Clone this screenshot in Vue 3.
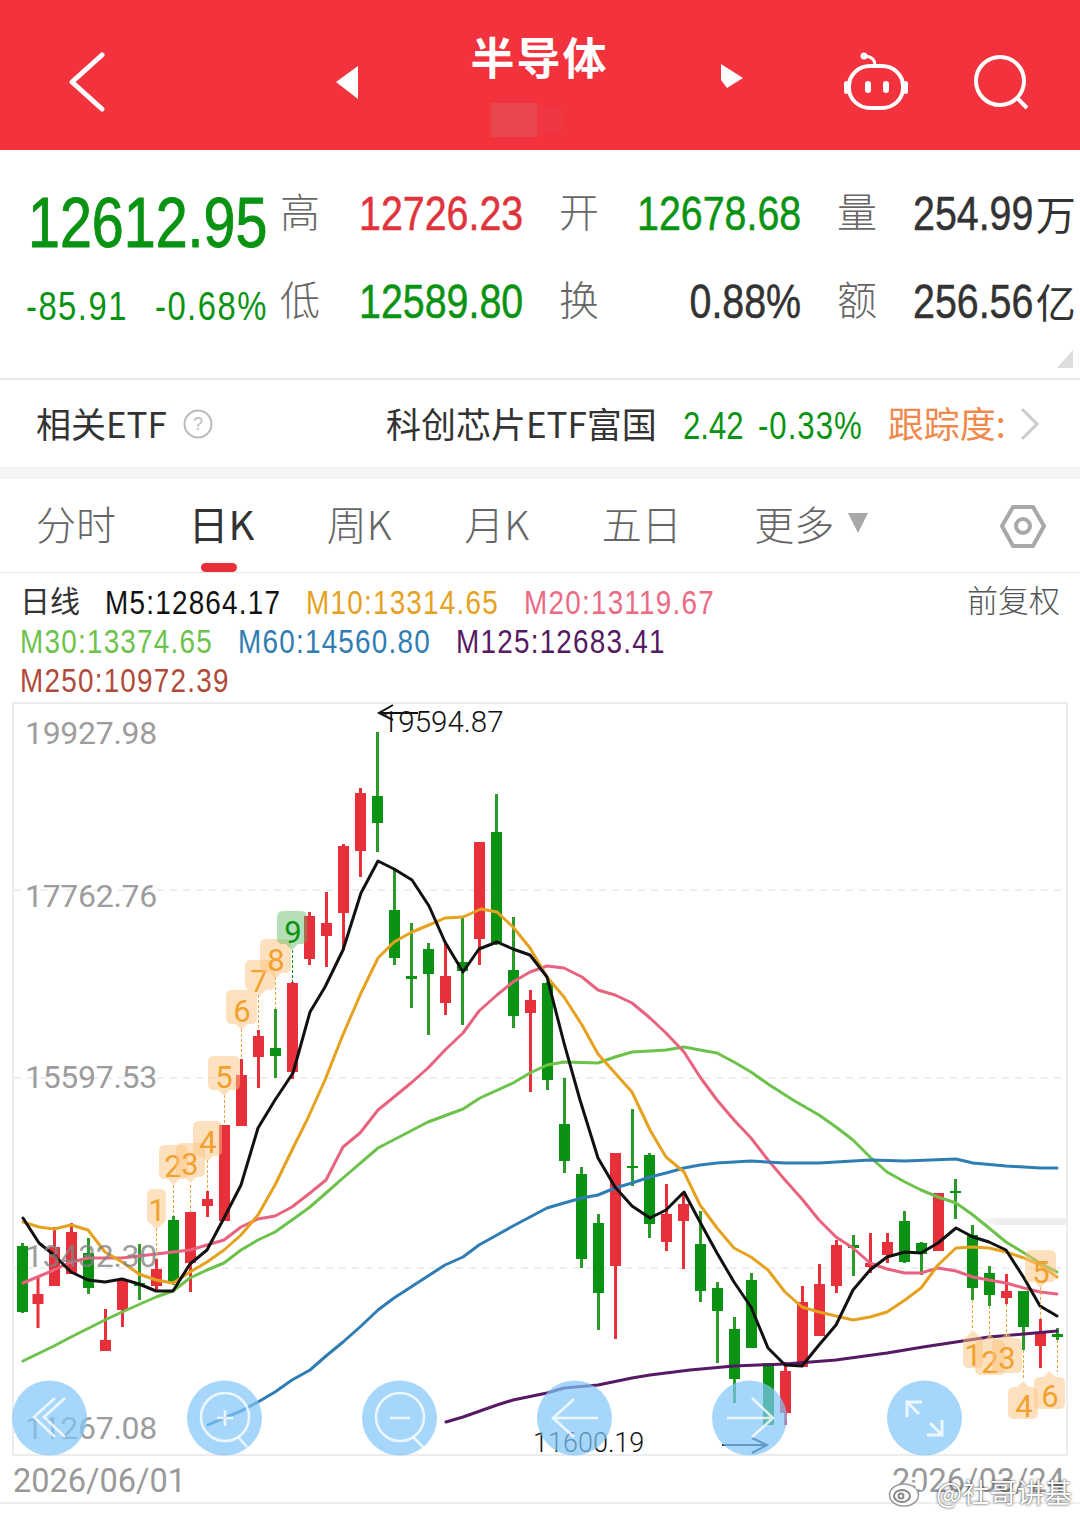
<template>
  <div class="page">
    <header class="top">
      <svg class="back" width="36" height="60" viewBox="0 0 36 60">
        <path d="M33 3 L3 30 L33 57" fill="none" stroke="#fff" stroke-width="5" stroke-linecap="round" stroke-linejoin="round" />
      </svg>
      <svg class="prev" width="22" height="34" viewBox="0 0 22 34">
        <polygon points="0,17 22,1 22,34" fill="#fff" />
      </svg>
      <div class="title-box">
        <div class="title">半导体</div>
        <div class="sub-blur"></div>
      </div>
      <svg class="next" width="22" height="26" viewBox="0 0 22 26">
        <polygon points="0,0 22,14 6,24 0,16" fill="#fff" />
      </svg>
      <svg class="robot" width="66" height="60" viewBox="0 0 66 60">
        <circle cx="21" cy="4" r="3.5" fill="#fff" />
        <path d="M23 4 C29 5 32 8 32 13" fill="none" stroke="#fff" stroke-width="3" />
        <rect x="6" y="14" width="54" height="42" rx="21" ry="20" fill="none" stroke="#fff" stroke-width="4" />
        <rect x="1" y="29" width="5" height="13" rx="2.5" fill="#fff" />
        <rect x="60" y="29" width="5" height="13" rx="2.5" fill="#fff" />
        <rect x="22" y="29" width="6" height="12" rx="3" fill="#fff" />
        <rect x="40" y="29" width="6" height="12" rx="3" fill="#fff" />
      </svg>
      <svg class="search" width="58" height="58" viewBox="0 0 58 58">
        <circle cx="27" cy="26" r="24" fill="none" stroke="#fff" stroke-width="4" />
        <path d="M44 43 L54 53" stroke="#fff" stroke-width="4" />
      </svg>
    </header>

    <section class="quote">
      <div class="grid">
        <div class="price"><span class="cond cond-l">12612.95</span></div>
        <div class="lab">高</div>
        <div class="val red"><span class="cond">12726.23</span></div>
        <div class="lab lab-m">开</div>
        <div class="val green"><span class="cond">12678.68</span></div>
        <div class="lab lab-m">量</div>
        <div class="val val-last dark"><span class="cond cond-l">254.99</span><span class="unit">万</span></div>

        <div class="change">
          <span class="fit fit-a"><span class="cond cond-l">-85.91</span></span>
          <span class="fit fit-b"><span class="cond cond-l">-0.68%</span></span>
        </div>
        <div class="lab">低</div>
        <div class="val green"><span class="cond">12589.80</span></div>
        <div class="lab lab-m">换</div>
        <div class="val dark"><span class="cond">0.88%</span></div>
        <div class="lab lab-m">额</div>
        <div class="val val-last dark"><span class="cond cond-l">256.56</span><span class="unit">亿</span></div>
      </div>
      <div class="corner"></div>
    </section>

    <section class="etf">
      <div class="etf-name">相关ETF</div>
      <svg class="help" width="30" height="30" viewBox="0 0 30 30">
        <circle cx="15" cy="15" r="13.5" fill="none" stroke="#bbb" stroke-width="2" />
        <text x="15" y="21" text-anchor="middle" class="help-q">?</text>
      </svg>
      <div class="etf-fund">科创芯片ETF富国</div>
      <span class="fit etf-num"><span class="cond cond-l">2.42</span></span>
      <span class="fit etf-num etf-pct"><span class="cond cond-l">-0.33%</span></span>
      <div class="etf-track">跟踪度:</div>
      <svg class="etf-arrow" width="20" height="34" viewBox="0 0 20 34">
        <path d="M2 2 L17 17 L2 32" fill="none" stroke="#ccc" stroke-width="3" />
      </svg>
    </section>

    <nav class="tabs">
      <div v-for="t in tabs" :key="t" class="tab" :class="{ on: t === '日K' }">{{ t }}</div>
      <div class="more-tri"></div>
      <svg class="hex" width="46" height="44" viewBox="0 0 46 44">
        <polygon points="2,21 13,2 33,2 44,21 33,41 13,41" fill="none" stroke="#a8a8a8" stroke-width="4" stroke-linejoin="round" />
        <circle cx="23" cy="21" r="7" fill="none" stroke="#a8a8a8" stroke-width="4" />
      </svg>
    </nav>

    <section class="legend">
      <div v-for="(row, i) in legend" :key="i" class="leg-row">
        <span v-if="i === 0" class="leg-day">日线</span>
        <span v-for="m in row" :key="m.t" class="fit" :style="{ width: m.w + 'px', color: m.c }"><span class="cond cond-l">{{ m.t }}</span></span>
        <span v-if="i === 0" class="leg-adj">前复权</span>
      </div>
    </section>

    <div class="chart">
      <svg width="1080" height="758" viewBox="0 700 1080 758">
        <defs>
          <linearGradient id="band" x1="0" x2="1" y1="0" y2="0">
            <stop offset="0" stop-color="#eee" stop-opacity="0" />
            <stop offset="0.25" stop-color="#eee" />
          </linearGradient>
        </defs>
        <rect x="13" y="703" width="1054" height="752" fill="none" stroke="#ececec" stroke-width="2" />
        <rect x="975" y="1218" width="91" height="7" fill="url(#band)" />
        <line v-for="y in [890, 1078, 1268]" :key="y" x1="14" x2="1066" :y1="y" :y2="y" stroke="#ddd" stroke-width="1" stroke-dasharray="7 6" />

        <g v-for="(c, i) in candles" :key="i">
          <rect :x="c[0] - 1.5" :y="c[4]" width="3" :height="c[5] - c[4]" :fill="c[1] === 'r' ? '#e8303a' : '#2a9a2a'" />
          <rect :x="c[0] - 5.5" :y="c[2]" width="11" :height="c[3] - c[2]" :fill="c[1] === 'r' ? '#e8303a' : '#0a9313'" />
        </g>

        <polyline v-for="l in lines" :key="l.c" :points="l.p" fill="none" :stroke="l.c" stroke-width="3" stroke-linejoin="round" stroke-linecap="round" />

        <line v-for="s in stems" :key="s[0] + '-' + s[1]" :x1="s[0]" :x2="s[0]" :y1="s[1]" :y2="s[2]" :stroke="s[3] || '#e8a33a'" stroke-width="1" stroke-dasharray="3 2" />
        <g v-for="b in badges" :key="b.t + b.x">
          <path :d="badgePath(b)" :fill="b.g ? 'rgba(90,185,95,.45)' : 'rgba(252,196,128,.5)'" />
          <text :x="b.tx" :y="b.ty" text-anchor="middle" class="badge-num" :fill="b.g ? '#0a9313' : '#f2a12e'">{{ b.t }}</text>
        </g>

        <text v-for="a in axis" :key="a.t" x="25" :y="a.y" class="axis">{{ a.t }}</text>

        <path d="M418 713 L379 713 M393 705 L379 713 L393 720" fill="none" stroke="#111" stroke-width="2" />
        <text x="382" y="732" class="mark">19594.87</text>
        <text x="533" y="1452" class="mark mark-low">11600.19</text>
        <path d="M722 1445 L767 1445 M752 1438 L767 1445 L752 1453" fill="none" stroke="#12384f" stroke-width="2" />

        <circle v-for="x in circles" :key="x" :cx="x" cy="1418" r="37.5" fill="rgba(128,198,249,.7)" />
        <g fill="none" stroke="rgba(255,255,255,.78)" stroke-width="2.6">
          <path d="M55 1398 L34 1417 L55 1437 M65 1398 L44 1417 L65 1437" />
          <circle cx="225" cy="1417" r="24" />
          <path d="M238 1437 L247 1447 M217 1418 L233 1418 M225 1410 L225 1426" />
          <circle cx="400" cy="1417" r="24" />
          <path d="M413 1437 L423 1447 M390 1418 L410 1418" />
          <path d="M553 1418 L598 1418 M574 1399 L553 1418 L574 1437" />
          <path d="M727 1418 L773 1418 M752 1398 L773 1418 L752 1437" />
          <path d="M907 1402 L919 1414 M930 1423 L942 1435 M922 1402 L907 1402 L907 1417 M927 1435 L942 1435 L942 1420" stroke-width="3" />
        </g>
      </svg>
    </div>

    <div class="dates">
      <span>2026/06/01</span>
      <span>2026/03/24</span>
    </div>
    <div class="below"></div>

    <div class="mark-wb">
      <svg width="38" height="34" viewBox="0 0 38 34">
        <ellipse cx="16" cy="21" rx="14.5" ry="11" fill="#fff" stroke="#999" stroke-width="1.5" />
        <ellipse cx="14" cy="22" rx="8" ry="6" fill="none" stroke="#888" stroke-width="2" />
        <circle cx="13" cy="22" r="2.5" fill="none" stroke="#888" stroke-width="2" />
        <path d="M22 5 C29 3 35 8 33 16 M24 10 C28 9 30 12 29 15" fill="none" stroke="#fff" stroke-width="3" />
      </svg>
      <span class="mark-text">@社哥讲基</span>
    </div>
  </div>
</template>

<script setup>
const tabs = ['分时', '日K', '周K', '月K', '五日', '更多']

const legend = [
  [
    { t: 'M5:12864.17', c: '#111', w: 176 },
    { t: 'M10:13314.65', c: '#e6a11e', w: 193 },
    { t: 'M20:13119.67', c: '#ec6a84', w: 193 }
  ],
  [
    { t: 'M30:13374.65', c: '#6cc24a', w: 193 },
    { t: 'M60:14560.80', c: '#2f7db3', w: 193 },
    { t: 'M125:12683.41', c: '#551a63', w: 209 }
  ],
  [{ t: 'M250:10972.39', c: '#b04a3a', w: 210 }]
]

// x, colour, body top, body bottom, wick top, wick bottom
const candles = [
  [22.5, 'g', 1246, 1312, 1243, 1313], [38, 'r', 1294, 1304, 1278, 1328], [54.5, 'r', 1247, 1286, 1227, 1286],
  [71.5, 'r', 1232, 1274, 1223, 1274], [88.5, 'g', 1253, 1288, 1238, 1294], [105.5, 'r', 1340, 1351, 1309, 1351],
  [122.5, 'r', 1280, 1310, 1278, 1327], [139.5, 'g', 1283, 1286, 1244, 1300], [156.5, 'r', 1269, 1286, 1259, 1290],
  [173.5, 'g', 1220, 1282, 1216, 1285], [190.5, 'r', 1212, 1263, 1212, 1292], [207.5, 'r', 1199, 1206, 1191, 1217],
  [224.5, 'r', 1125, 1221, 1125, 1221], [241.5, 'r', 1075, 1126, 1059, 1126], [258.5, 'r', 1036, 1057, 1030, 1088],
  [275.5, 'g', 1048, 1056, 1009, 1078], [292.5, 'r', 983, 1072, 982, 1079], [309.5, 'r', 916, 959, 912, 965],
  [326.5, 'r', 923, 936, 892, 967], [343.5, 'r', 846, 913, 844, 950], [360.5, 'r', 793, 851, 788, 877],
  [377.5, 'g', 796, 823, 732, 852], [394.5, 'g', 910, 958, 868, 965], [411.5, 'g', 976, 979, 923, 1008],
  [428.5, 'g', 949, 974, 943, 1035], [445.5, 'r', 976, 1003, 943, 1015], [462.5, 'g', 962, 971, 918, 1025],
  [479.5, 'r', 842, 939, 842, 965], [496.5, 'g', 832, 943, 794, 945], [513.5, 'g', 970, 1016, 917, 1028],
  [530.5, 'r', 1000, 1013, 990, 1092], [547.5, 'g', 983, 1080, 982, 1090], [564.5, 'g', 1124, 1161, 1078, 1173],
  [581.5, 'g', 1174, 1259, 1167, 1268], [598.5, 'g', 1223, 1293, 1214, 1330], [615.5, 'r', 1153, 1266, 1153, 1339],
  [632.5, 'g', 1166, 1168, 1109, 1186], [649.5, 'g', 1155, 1224, 1153, 1238], [666.5, 'r', 1214, 1242, 1184, 1251],
  [683.5, 'r', 1204, 1221, 1193, 1269], [700.5, 'g', 1244, 1291, 1211, 1302], [717.5, 'g', 1288, 1311, 1282, 1363],
  [734.5, 'g', 1329, 1379, 1317, 1403], [751.5, 'g', 1280, 1348, 1273, 1348], [768.5, 'g', 1363, 1425, 1363, 1425],
  [785.5, 'r', 1371, 1413, 1362, 1425], [802.5, 'r', 1302, 1367, 1286, 1367], [819.5, 'r', 1284, 1336, 1264, 1336],
  [836.5, 'r', 1245, 1286, 1240, 1293], [853.5, 'g', 1245, 1248, 1235, 1276], [870.5, 'r', 1263, 1267, 1233, 1273],
  [887.5, 'r', 1242, 1255, 1233, 1263], [904.5, 'g', 1221, 1262, 1211, 1263], [921.5, 'g', 1243, 1254, 1242, 1275],
  [938.5, 'r', 1193, 1251, 1193, 1251], [955.5, 'g', 1191, 1193, 1179, 1219], [972.5, 'g', 1235, 1288, 1225, 1300],
  [989.5, 'g', 1273, 1295, 1266, 1306], [1006.5, 'r', 1291, 1298, 1274, 1304], [1023.5, 'g', 1291, 1327, 1291, 1350],
  [1040.5, 'r', 1332, 1346, 1319, 1368], [1057.5, 'g', 1334, 1337, 1328, 1340]
]

const lines = [
  { c: '#6cc24a', p: '23,1361 54,1346 71,1337 105,1320 122,1312 156,1297 173,1291 190,1278 207,1270 224,1263 241,1250 258,1240 275,1232 292,1220 310,1207 326,1193 343,1178 378,1148 428,1122 463,1109 480,1098 513,1083 530,1073 547,1065 564,1062 598,1063 615,1057 632,1052 650,1051 666,1050 684,1047 700,1050 717,1053 734,1062 751,1072 768,1084 793,1100 819,1115 836,1127 853,1140 870,1157 887,1172 905,1182 921,1190 938,1197 956,1203 973,1215 989,1228 1006,1242 1024,1253 1040,1263 1057,1272' },
  { c: '#e9627f', p: '23,1283 54,1270 71,1262 88,1258 122,1258 156,1254 190,1250 207,1245 224,1240 241,1227 258,1219 275,1216 292,1207 310,1193 326,1180 343,1147 360,1133 378,1110 394,1097 411,1083 428,1068 445,1050 463,1033 479,1011 497,995 513,982 530,972 547,966 564,968 582,977 598,990 615,995 632,1003 650,1018 666,1033 684,1052 700,1077 717,1100 734,1120 751,1138 768,1160 785,1180 802,1199 819,1220 836,1237 853,1248 870,1263 887,1269 905,1273 921,1273 938,1268 956,1271 973,1277 989,1280 1006,1283 1024,1288 1040,1292 1057,1294' },
  { c: '#2f7db3', p: '208,1425 224,1418 241,1411 258,1402 275,1392 292,1380 310,1370 326,1356 343,1342 360,1327 378,1310 394,1298 411,1287 428,1276 445,1265 463,1257 479,1245 497,1235 513,1226 530,1217 547,1208 564,1203 582,1198 598,1195 615,1188 632,1183 650,1177 666,1173 684,1168 700,1165 717,1163 751,1161 785,1163 819,1163 853,1161 870,1160 905,1161 956,1159 973,1163 1006,1166 1040,1168 1057,1168' },
  { c: '#551a63', p: '446,1422 463,1417 497,1405 513,1400 547,1393 564,1388 598,1385 632,1378 650,1375 690,1370 734,1366 785,1364 836,1360 887,1353 923,1347 956,1342 989,1337 1024,1334 1057,1331' },
  { c: '#e6a11e', p: '23,1222 39,1227 54,1229 71,1225 88,1230 105,1252 122,1262 139,1274 156,1280 173,1283 190,1272 207,1262 224,1250 241,1235 258,1215 275,1185 292,1150 307,1120 325,1080 342,1037 361,993 378,958 394,942 412,932 429,925 445,918 463,917 481,909 497,912 513,927 530,948 547,977 564,997 582,1025 598,1054 615,1073 632,1092 650,1130 666,1157 684,1172 700,1205 717,1228 734,1248 751,1257 768,1270 785,1292 802,1307 819,1312 836,1316 853,1320 870,1317 887,1312 905,1300 921,1288 938,1265 956,1248 973,1247 989,1248 1006,1252 1024,1258 1040,1265 1057,1277' },
  { c: '#111', p: '23,1218 39,1243 54,1255 71,1272 88,1280 105,1282 122,1279 139,1284 156,1291 173,1291 190,1264 207,1250 224,1218 241,1185 258,1128 275,1100 293,1073 310,1012 325,987 343,950 361,893 378,861 394,869 412,880 429,906 445,942 463,972 479,949 497,942 513,949 530,955 547,977 564,1043 580,1100 598,1158 615,1187 632,1206 650,1218 666,1210 684,1192 700,1222 717,1253 734,1282 751,1307 768,1348 785,1365 802,1366 819,1345 836,1325 853,1290 870,1270 887,1257 905,1252 921,1253 938,1243 956,1228 973,1237 989,1242 1006,1250 1024,1278 1040,1306 1057,1316' }
]

const stems = [
  [156.5, 1228, 1259], [173.5, 1185, 1216], [190.5, 1185, 1212], [207.5, 1160, 1191], [224.5, 1095, 1125],
  [241.5, 1029, 1059], [258.5, 995, 1030], [275.5, 977, 1009], [292.5, 950, 982, '#0a9313'],
  [972.5, 1300, 1330], [989.5, 1306, 1340], [1006.5, 1304, 1338], [1023.5, 1350, 1380], [1057.5, 1340, 1372], [1040.5, 1287, 1319]
]

// box: x1, y1, x2, y2, tip direction ('d' down, 'u' up)
const badges = [
  { t: '1', x: 147, y: 1189, x2: 166, y2: 1224, tip: 'd', tx: 157, ty: 1221 },
  { t: '2', x: 159, y: 1145, x2: 188, y2: 1179, tip: 'd', tx: 173, ty: 1177 },
  { t: '3', x: 176, y: 1143, x2: 205, y2: 1177, tip: 'd', tx: 190, ty: 1175 },
  { t: '4', x: 193, y: 1121, x2: 222, y2: 1156, tip: 'd', tx: 208, ty: 1153 },
  { t: '5', x: 208, y: 1056, x2: 240, y2: 1090, tip: 'd', tx: 224, ty: 1088 },
  { t: '6', x: 226, y: 990, x2: 257, y2: 1024, tip: 'd', tx: 242, ty: 1022 },
  { t: '7', x: 245, y: 960, x2: 275, y2: 990, tip: 'd', tx: 259, ty: 992 },
  { t: '8', x: 260, y: 939, x2: 291, y2: 973, tip: 'd', tx: 276, ty: 971 },
  { t: '9', x: 277, y: 911, x2: 307, y2: 944, tip: 'd', tx: 293, ty: 943, g: true },
  { t: '5', x: 1025, y: 1250, x2: 1056, y2: 1282, tip: 'd', tx: 1041, ty: 1283 },
  { t: '1', x: 963, y: 1336, x2: 983, y2: 1368, tip: 'u', tx: 973, ty: 1366 },
  { t: '2', x: 975, y: 1340, x2: 1005, y2: 1375, tip: 'u', tx: 990, ty: 1373 },
  { t: '3', x: 992, y: 1338, x2: 1022, y2: 1373, tip: 'u', tx: 1007, ty: 1369 },
  { t: '4', x: 1008, y: 1387, x2: 1038, y2: 1419, tip: 'u', tx: 1024, ty: 1417 },
  { t: '6', x: 1034, y: 1377, x2: 1065, y2: 1409, tip: 'u', tx: 1050, ty: 1407 }
]

const axis = [
  { t: '19927.98', y: 744 },
  { t: '17762.76', y: 907 },
  { t: '15597.53', y: 1088 },
  { t: '13432.30', y: 1267 },
  { t: '11267.08', y: 1439 }
]

const circles = [49.5, 224.5, 399.5, 574.5, 749.5, 924.5]

function badgePath(b) {
  const r = 6
  const mx = (b.x + b.x2) / 2
  const top = b.tip === 'u' ? `L${mx - 6} ${b.y} L${mx} ${b.y - 6} L${mx + 6} ${b.y} ` : ''
  const bot = b.tip === 'd' ? `L${mx + 6} ${b.y2} L${mx} ${b.y2 + 6} L${mx - 6} ${b.y2} ` : ''
  return `M${b.x + r} ${b.y} ${top}L${b.x2 - r} ${b.y} Q${b.x2} ${b.y} ${b.x2} ${b.y + r} L${b.x2} ${b.y2 - r} Q${b.x2} ${b.y2} ${b.x2 - r} ${b.y2} ${bot}L${b.x + r} ${b.y2} Q${b.x} ${b.y2} ${b.x} ${b.y2 - r} L${b.x} ${b.y + r} Q${b.x} ${b.y} ${b.x + r} ${b.y} Z`
}
</script>

<style scoped>
.page {
  position: relative;
  width: 1080px;
  height: 1515px;
  overflow: hidden;
  background: #fff;
  font-family: "Noto Sans CJK SC", "Liberation Sans", sans-serif;
}

/* no condensed face is installed, so digits are squeezed to match the app's DIN-like font */
.cond {
  display: inline-block;
  flex-shrink: 0;
  font-family: "Liberation Sans", sans-serif;
  white-space: nowrap;
  transform: scaleX(.82);
  transform-origin: right center;
}
.cond-l { transform-origin: left center; }
.fit {
  display: inline-block;
  flex-shrink: 0;
  white-space: nowrap;
}

.top {
  display: flex;
  align-items: center;
  box-sizing: border-box;
  height: 150px;
  padding: 14px 49px 0 69px;
  background: #f2323c;
}
.prev { margin-left: 231px; }
.title-box {
  flex: 1;
  align-self: flex-start;
  margin-top: 17px;
  display: flex;
  flex-direction: column;
  align-items: center;
}
.title {
  font-size: 44px;
  line-height: 50px;
  font-weight: 700;
  letter-spacing: 2px;
  color: #fff;
}
.sub-blur {
  width: 46px;
  height: 34px;
  margin: 22px 52px 0 0;
  background: #e9474f;
  box-shadow: 30px 0 0 -4px #f03640;
}
.next { margin-top: -10px; }
.robot { margin: 0 0 0 100px; }
.search { margin: 4px 0 0 64px; }

.quote {
  position: relative;
  box-sizing: border-box;
  height: 230px;
  padding-top: 19px;
  border-bottom: 2px solid #e8e8e8;
}
.grid {
  display: grid;
  grid-template-columns: 266px 92px 165px 113px 165px 112px 167px;
  grid-auto-rows: 88px;
  align-items: center;
}
.price {
  display: flex;
  margin-top: 20px;
  padding-left: 28px;
  font-size: 70px;
  color: #0a9313;
  -webkit-text-stroke: 1px #0a9313;
}
.change {
  display: flex;
  gap: 28px;
  margin-top: 4px;
  padding-left: 26px;
  font-size: 40px;
  letter-spacing: 1.8px;
  color: #0a9313;
}
.fit-a { width: 101px; }
.fit-b { width: 111px; }
.lab {
  margin-top: -6px;
  padding-left: 14px;
  font-size: 40px;
  font-weight: 300;
  color: #666;
}
.lab-m { padding-left: 36px; }
.val {
  display: flex;
  justify-content: flex-end;
  align-items: center;
  font-size: 48px;
  -webkit-text-stroke: .5px currentColor;
}
.val-last { justify-content: flex-start; }
.val-last .cond { margin-right: -24px; }
.unit {
  font-size: 40px;
  font-weight: 400;
  -webkit-text-stroke: 0;
}
.red { color: #e0343c; }
.green { color: #0a9313; }
.dark { color: #333; }
.corner {
  position: absolute;
  right: 7px;
  bottom: 10px;
  width: 0;
  height: 0;
  border-left: 16px solid transparent;
  border-bottom: 18px solid #ddd;
}

.etf {
  display: flex;
  align-items: center;
  box-sizing: border-box;
  height: 99px;
  padding: 0 0 3px 36px;
  border-bottom: 12px solid #f5f5f5;
  font-size: 35px;
  color: #333;
}
.help { margin: 3px 0 0 16px; }
.help-q {
  font-family: "Liberation Sans", sans-serif;
  font-size: 18px;
  fill: #bbb;
}
.etf-fund { margin-left: 173px; }
.etf-num {
  width: 60px;
  margin-left: 26px;
  font-size: 38px;
  color: #0a9313;
}
.etf-pct {
  width: 104px;
  margin-left: 15px;
  letter-spacing: 1.2px;
}
.etf-track {
  margin-left: 26px;
  font-size: 36px;
  color: #ef8a4c;
}
.etf-arrow { margin: 3px 0 0 14px; }

.tabs {
  position: relative;
  display: flex;
  align-items: center;
  gap: 72.5px;
  box-sizing: border-box;
  height: 94px;
  padding: 0 34px 5px 36px;
  border-bottom: 1px solid #e8e8e8;
}
.tab {
  position: relative;
  font-size: 40px;
  font-weight: 300;
  color: #666;
}
.tab.on {
  font-weight: 400;
  color: #333;
}
.tab.on::after {
  content: "";
  position: absolute;
  left: 12px;
  right: 17px;
  bottom: -20px;
  height: 9px;
  border-radius: 5px;
  background: #e8303a;
}
.more-tri {
  width: 0;
  height: 0;
  margin-left: -59px;
  border-left: 10px solid transparent;
  border-right: 10px solid transparent;
  border-top: 20px solid #a8a8a8;
}
.hex {
  margin-left: auto;
  margin-top: 7px;
}

.legend {
  box-sizing: border-box;
  height: 127px;
  padding: 7px 20px 0;
}
.leg-row {
  display: flex;
  align-items: center;
  gap: 25px;
  height: 39px;
  font-size: 34px;
  letter-spacing: 1.5px;
  white-space: nowrap;
}
.leg-day {
  margin-top: -2px;
  font-size: 30px;
  letter-spacing: 0;
  color: #333;
}
.leg-adj {
  margin-top: -2px;
  margin-left: auto;
  font-size: 31px;
  font-weight: 300;
  letter-spacing: 0;
  color: #555;
}

.chart { height: 758px; }
.chart svg { display: block; }
.axis {
  font-family: Roboto, sans-serif;
  font-size: 32px;
  letter-spacing: -.3px;
  fill: rgba(130, 130, 130, .8);
}
.badge-num {
  font-family: Roboto, sans-serif;
  font-size: 31px;
}
.mark {
  font-family: Roboto, sans-serif;
  font-size: 29.5px;
  font-weight: 300;
  fill: #111;
}
.mark-low { font-size: 27px; }

.dates {
  display: flex;
  justify-content: space-between;
  box-sizing: border-box;
  height: 44px;
  padding: 0 15px 0 13px;
  font-family: Roboto, sans-serif;
  font-size: 32.5px;
  line-height: 46px;
  color: #999;
}
.below {
  height: 0;
  border-top: 2px solid #eee;
}

.mark-wb {
  position: absolute;
  left: 888px;
  top: 1471px;
  display: flex;
  align-items: center;
  font-size: 27.5px;
  color: #fff;
  text-shadow: 0 0 3px rgba(0, 0, 0, .7), 0 0 1px rgba(0, 0, 0, .5);
}
.mark-text { margin-left: 10px; }
</style>
